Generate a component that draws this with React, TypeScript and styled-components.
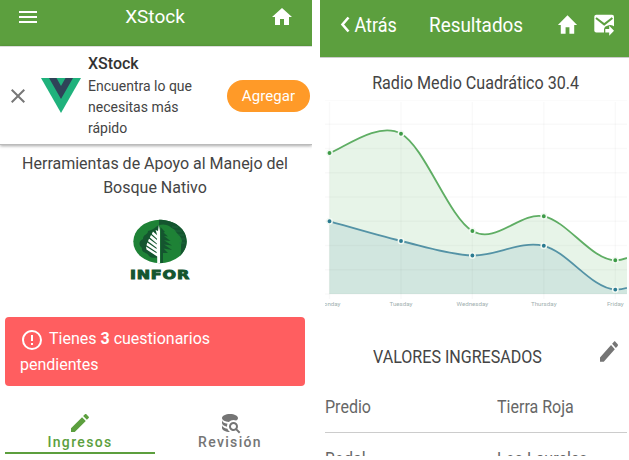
import React from 'react';
import styled, { createGlobalStyle } from 'styled-components';

const GREEN = '#5c9f3e';

const GlobalStyle = createGlobalStyle`
  * { box-sizing: border-box; }
  body { margin: 0; background: #fff; font-family: Roboto, sans-serif; overflow: hidden; }
  svg { display: block; flex: none; }
  button { font-family: inherit; border: 0; }
`;

const Page = styled.main`
  display: flex;
  gap: 8px;
  width: 629px;
  height: 460px;
  background: #fff;
`;

const Phone = styled.section<{ $width: number }>`
  display: flex;
  flex-direction: column;
  width: ${p => p.$width}px;
  height: 456px;
  flex: none;
  overflow: hidden;
`;

/* Text with a set width-to-height proportion */
const Label = styled.span<{ $size: number; $stretch?: number; $color?: string; $weight?: number; $origin?: string }>`
  display: inline-block;
  font-size: ${p => p.$size}px;
  font-weight: ${p => p.$weight ?? 400};
  color: ${p => p.$color ?? '#444'};
  line-height: 24px;
  white-space: nowrap;
  transform: scaleX(${p => p.$stretch ?? 1});
  transform-origin: ${p => p.$origin ?? 'left'} center;
`;

const HomeBar = styled.header`
  display: grid;
  grid-template-columns: 58px 1fr 60px;
  justify-items: center;
  align-items: center;
  height: 46px;
  padding: 0 0 12px;
  background: ${GREEN};
  color: #fff;
  flex: none;
  & > svg:first-child { margin-left: -2px; }
`;

const InstallBanner = styled.aside`
  display: flex;
  align-items: center;
  height: 99px;
  flex: none;
  margin-bottom: 7px;
  padding: 0 2px 0 6px;
  border-top: 1px solid #ddd;
  border-bottom: 1px solid #bbb;
  box-shadow: 0 1px 3px rgba(0, 0, 0, 0.35);
  color: #777;
`;

const BannerLogo = styled.div`
  width: 40px;
  margin: 0 7px 0 11px;
`;

const BannerCopy = styled.div`
  flex: 1;
  padding-top: 2px;
  font-size: 14px;
  line-height: 21px;
  color: #444;
`;

const BannerTitle = styled.div`
  margin: -1px 0 2px;
  font-size: 16px;
  font-weight: 500;
  color: #333;
`;

const AddButton = styled.button`
  width: 83px;
  height: 32px;
  padding: 0;
  border-radius: 16px;
  background: #ff9a28;
  color: #fff;
  font-size: 15px;
  letter-spacing: 0.1px;
`;

const Tagline = styled.p`
  margin: 0;
  padding: 0 15px 0 13px;
  color: #444;
  font-size: 16px;
  line-height: 24px;
  text-align: center;
`;

const Brand = styled.div`
  display: flex;
  justify-content: center;
  height: 117px;
  padding: 19px 0 0 8px;
`;

const Alert = styled.div`
  height: 69px;
  width: 300px;
  margin-left: 5px;
  padding: 9px 15px;
  border-radius: 4px;
  background: #ff5e60;
  color: #fff;
  font-size: 16px;
  line-height: 25px;
  flex: none;
  svg { display: inline-block; vertical-align: -8px; margin-right: 5px; }
`;

const Tabs = styled.nav`
  display: flex;
  width: 300px;
  height: 43px;
  margin: 25px 0 0 5px;
`;

const Tab = styled.div<{ $active?: boolean }>`
  flex: 1;
  display: flex;
  flex-direction: column;
  align-items: center;
  color: ${p => (p.$active ? GREEN : '#757575')};
  border-bottom: 2px solid ${p => (p.$active ? GREEN : 'transparent')};
  font-size: 14px;
  font-weight: 500;
  letter-spacing: 1.35px;
  line-height: 14px;
`;

const ResultsBar = styled.header`
  display: flex;
  align-items: center;
  height: 58px;
  flex: none;
  padding: 0 14px 8px 16px;
  background: ${GREEN};
  border-bottom: 1px solid #ccc;
  color: #fff;
`;

const BackLink = styled.div`
  display: flex;
  align-items: center;
  width: 93px;
`;

const BarTitle = styled.div`
  flex: 1;
`;

const BarActions = styled.div`
  display: flex;
  align-items: center;
  gap: 15px;
`;

const Heading = styled.h2`
  margin: 0;
  height: 42px;
  padding: 9px 0 0 3px;
  flex: none;
  text-align: center;
`;

const ChartBox = styled.div`
  height: 218px;
  flex: none;
  padding-left: 5px;
`;

const ValuesHeader = styled.div`
  display: flex;
  align-items: center;
  height: 63px;
  flex: none;
  padding: 14px 8px 0 53px;
  color: #757575;
  & > svg { margin: -10px 0 0 auto; }
`;

const ValueRow = styled.div`
  display: grid;
  grid-template-columns: 172px 1fr;
  align-items: center;
  height: 52px;
  flex: none;
  margin: 0 2px 0 5px;
  border-bottom: 1px solid #ccc;
`;

const paths = {
  menu: 'M3,6H21V8H3V6M3,11H21V13H3V11M3,16H21V18H3V16Z',
  home: 'M10,20V14H14V20H19V12H22L12,3L2,12H5V20H10Z',
  close: 'M19,6.41L17.59,5L12,10.59L6.41,5L5,6.41L10.59,12L5,17.59L6.41,19L12,13.41L17.59,19L19,17.59L13.41,12L19,6.41Z',
  alert: 'M11,15H13V17H11V15M11,7H13V13H11V7M12,2C6.47,2 2,6.5 2,12A10,10 0 0,0 12,22A10,10 0 0,0 22,12A10,10 0 0,0 12,2M12,20A8,8 0 0,1 4,12A8,8 0 0,1 12,4A8,8 0 0,1 20,12A8,8 0 0,1 12,20Z',
  pencil: 'M20.71,7.04C21.1,6.65 21.1,6 20.71,5.63L18.37,3.29C18,2.9 17.35,2.9 16.96,3.29L15.12,5.12L18.87,8.87M3,17.25V21H6.75L17.81,9.93L14.06,6.18L3,17.25Z',
  search: 'M18.68,12.32C16.92,10.56 14.07,10.57 12.32,12.33C10.56,14.09 10.56,16.94 12.32,18.69C13.81,20.17 16.11,20.43 17.89,19.32L21,22.39L22.39,21L19.3,17.89C20.43,16.12 20.17,13.8 18.68,12.32M17.27,17.27C16.29,18.25 14.71,18.24 13.73,17.27C12.76,16.29 12.76,14.71 13.74,13.73C14.71,12.76 16.29,12.76 17.27,13.73C18.24,14.71 18.24,16.29 17.27,17.27M10.9,20.1C10.25,19.44 9.74,18.65 9.42,17.78C6.27,17.25 4,15.76 4,14V17C4,19.21 7.58,21 12,21V21C11.6,20.74 11.23,20.44 10.9,20.1M4,9V12C4,13.68 6.07,15.12 9,15.7C9,15.63 9,15.57 9,15.5C9,14.57 9.2,13.65 9.58,12.81C6.34,12.3 4,10.79 4,9M12,3C7.58,3 4,4.79 4,7C4,9 7,10.68 10.85,11H10.9C12.1,9.74 13.76,9 15.5,9C16.41,9 17.31,9.19 18.14,9.57C19.36,8.88 20,7.96 20,7C20,4.79 16.42,3 12,3Z',
};

type IconProps = { name: keyof typeof paths; width?: number; height?: number };

const Icon = ({ name, width = 24, height = 24 }: IconProps) => (
  <svg width={width} height={height} viewBox="0 0 24 24" preserveAspectRatio="none" fill="currentColor">
    <path d={paths[name]} />
  </svg>
);

const BackChevron = () => (
  <svg width="14" height="20" viewBox="0 0 14 20" fill="none" stroke="#fff" strokeWidth="2.6">
    <path d="M12.5 2.5 L6.5 9.5 L12.5 16.5" />
  </svg>
);

const SendMailIcon = () => (
  <svg width="21" height="22" viewBox="0 0 21 22">
    <rect x="0.3" y="0.8" width="19.7" height="17.8" rx="2" fill="#fff" />
    <path d="M2 4 L10.2 10.4 L18.4 4" fill="none" stroke={GREEN} strokeWidth="2" />
    <path d="M10 18.8 V15 Q10.4 12.4 13.4 11.8 Q17 9.8 21 13 V22 H10 Z" fill={GREEN} />
    <path d="M11.3 15 H15.2 V11.8 L20 16.8 L15.2 21.7 V18.6 H11.3 Z" fill="#fff" />
  </svg>
);

const VueMark = () => (
  <svg width="40" height="35" viewBox="0 0 40 35">
    <path d="M0 0 H40 L20 35 Z" fill="#1fb27c" />
    <path d="M8 0 H15.5 L20 8 L24.5 0 H32 L20 21 Z" fill="#2f4358" />
  </svg>
);

const InforLogo = () => (
  <svg width="62" height="62" viewBox="0 0 62 62">
    <ellipse cx="31" cy="22.5" rx="26.7" ry="21.7" fill="#1e8236" />
    <path d="M30 .8 C46 .8 57.7 10 57.7 22.5 C57.7 28 55 33 51 37 C53 31 51 26 53 22 C52 16 48 16 46 11 C41 8 38 4 30 6 Z" fill="#14552f" />
    <path d="M30 6 C25 9 24 11 19 12 C19 16 14 15 14 20 C9 22 10 27 13 29 C12 34 18 33 20 37 C23 40 27 38 30 39 Z" fill="#14552f" />
    <path d="M29.8 6 L31 12 V44 H28.2 V37.5 L17.5 30.5 L17 27.5 L27.6 34.3 V33 L17.5 26.3 L18.3 23.6 L27.6 30 V28.8 L19 22.3 L20 19.8 L27.8 25.6 V24.4 L20.8 18.6 L22 16 L28 21 V19.8 L22.8 14.9 L24 12.6 L28.2 16.3 L26.6 11 L29 12 Z" fill="#fff" />
    <path d="M31.5 8 L36 13 L34.5 13.5 L39 17.5 L35 17 L41.5 22 L35 21.2 L43 26.5 L35 25.4 L43 31 L34.5 29.5 L39 34 L34 34 V44 H31.5 Z" fill="#14552f" />
    <path d="M43 8 H49 M45 12 H53 M48 16 H55 M50 20 H56 M50 24 H56" stroke="#247443" strokeWidth=".6" />
    <text x="1" y="60" textLength="60" lengthAdjust="spacingAndGlyphs" fontFamily="DejaVu Sans, sans-serif" fontWeight="700" fontSize="12" letterSpacing=".6" fill="#14552f" stroke="#14552f" strokeWidth=".9">INFOR</text>
  </svg>
);

type Point = [number, number];
const days: [string, number][] = [
  ['Monday', 4.5], ['Tuesday', 76], ['Wednesday', 147.4], ['Thursday', 218.8], ['Friday', 290.3], ['Saturday', 361.8],
];
const toPoints = (ys: number[]): Point[] => ys.map((y, i) => [days[i][1], y]);
const upper = toPoints([53, 33.7, 131, 116.3, 160.3, 117]);
const lower = toPoints([121.3, 141, 155.5, 145.8, 189.6, 152]);
const BASE = 194;

const spline = (pts: Point[]) =>
  pts.slice(0, -1).reduce((d, p1, i) => {
    const p0 = pts[i - 1] ?? p1;
    const p2 = pts[i + 1];
    const p3 = pts[i + 2] ?? p2;
    const c1 = [p1[0] + (p2[0] - p0[0]) / 6, p1[1] + (p2[1] - p0[1]) / 6];
    const c2 = [p2[0] - (p3[0] - p1[0]) / 6, p2[1] - (p3[1] - p1[1]) / 6];
    return `${d} C${c1} ${c2} ${p2}`;
  }, `M${pts[0]}`);

const Series = ({ points, color, dot, fill }: { points: Point[]; color: string; dot: string; fill: string }) => (
  <g>
    <path d={`${spline(points)} V${BASE} H${points[0][0]} Z`} fill={fill} />
    <path d={spline(points)} fill="none" stroke={color} strokeWidth="1.8" />
    {points.map(([x, y]) => (
      <circle key={x} cx={x} cy={y} r="2.7" fill={dot} stroke="#f3faf3" strokeWidth="1.5" />
    ))}
  </g>
);

const Chart = () => (
  <svg width="302" height="218" viewBox="0 0 302 218">
    <Series points={upper} color="#5fae64" dot="#3f9d49" fill="#e7f4e8" />
    <Series points={lower} color="#5493a6" dot="#2c7d94" fill="#d1e6df" />
    <g stroke="#000" strokeOpacity=".022" strokeWidth="1.5">
      {Array.from({ length: 9 }, (_, i) => <path key={i} d={`M0 ${24.25 * i}H302`} />)}
      {days.map(([day, x]) => <path key={day} d={`M${x} 2V199`} />)}
    </g>
    {days.slice(0, 5).map(([day, x]) => (
      <text key={day} x={x} y="206" textAnchor="middle" fontSize="6.2" fill="#9fb0b0">{day}</text>
    ))}
  </svg>
);

export default function App() {
  return (
    <>
      <GlobalStyle />
      <Page>
        <Phone $width={312}>
          <HomeBar>
            <Icon name="menu" />
            <Label $size={19} $color="#fff" $origin="center">XStock</Label>
            <Icon name="home" />
          </HomeBar>
          <InstallBanner>
            <Icon name="close" />
            <BannerLogo><VueMark /></BannerLogo>
            <BannerCopy>
              <BannerTitle>XStock</BannerTitle>
              Encuentra lo que<br />necesitas más<br />rápido
            </BannerCopy>
            <AddButton>Agregar</AddButton>
          </InstallBanner>
          <Tagline>Herramientas de Apoyo al Manejo del Bosque Nativo</Tagline>
          <Brand><InforLogo /></Brand>
          <Alert>
            <Icon name="alert" />Tienes <b>3</b> cuestionarios<br />pendientes
          </Alert>
          <Tabs>
            <Tab $active><Icon name="pencil" />Ingresos</Tab>
            <Tab><Icon name="search" />Revisión</Tab>
          </Tabs>
        </Phone>
        <Phone $width={309}>
          <ResultsBar>
            <BackLink>
              <BackChevron />
              <Label $size={20} $stretch={0.9} $color="#fff">&nbsp;Atrás</Label>
            </BackLink>
            <BarTitle><Label $size={21} $stretch={0.9} $color="#fff">Resultados</Label></BarTitle>
            <BarActions>
              <Icon name="home" width={23} height={26} />
              <SendMailIcon />
            </BarActions>
          </ResultsBar>
          <Heading>
            <Label $size={18} $stretch={0.895} $color="#444" $origin="center">Radio Medio Cuadrático 30.4</Label>
          </Heading>
          <ChartBox><Chart /></ChartBox>
          <ValuesHeader>
            <Label $size={18} $stretch={0.893} $color="#444">VALORES INGRESADOS</Label>
            <Icon name="pencil" width={24} height={27} />
          </ValuesHeader>
          <ValueRow>
            <Label $size={18} $stretch={0.89} $color="#666">Predio</Label>
            <Label $size={18} $stretch={0.89} $color="#666">Tierra Roja</Label>
          </ValueRow>
          <ValueRow>
            <Label $size={18} $stretch={0.89} $color="#666">Rodal</Label>
            <Label $size={18} $stretch={0.89} $color="#666">Los Laureles</Label>
          </ValueRow>
        </Phone>
      </Page>
    </>
  );
}
